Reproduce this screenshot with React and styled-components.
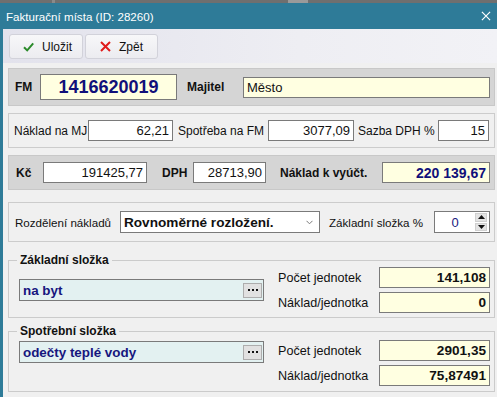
import React from 'react';
import styled, { createGlobalStyle } from 'styled-components';

const Global = createGlobalStyle`
  html, body { margin: 0; padding: 0; background: #f0f0f0; overflow: hidden; }
  body { font-family: "Liberation Sans", Arial, sans-serif; font-size: 12px; color: #111; }
  * { box-sizing: border-box; }
`;

const Screen = styled.div`
  width: 497px;
  height: 397px;
  display: flex;
  flex-direction: column;
  background: #6e6e6e;
  overflow: hidden;
`;

const BackStrip = styled.div`
  height: 3px;
  flex: none;
  background: linear-gradient(to right, #6f6f6f 0, #6f6f6f 52px, #8a8a8a 52px, #8a8a8a 55px, #6f6f6f 55px, #6f6f6f 288px, #9a9a9a 288px, #9a9a9a 308px, #6f6f6f 308px);
`;

const Window = styled.div`
  flex: 1;
  display: flex;
  flex-direction: column;
  border-left: 3px solid #2e7b98;
  background: #f0f0f0;
  min-height: 0;
`;

const TitleBar = styled.div`
  height: 26px;
  flex: none;
  display: flex;
  align-items: center;
  justify-content: space-between;
  padding: 0 6px 0 3px;
  background: #2e7b98;
  color: #fff;
  font-size: 11.6px;
`;

const Toolbar = styled.div`
  height: 34px;
  flex: none;
  display: flex;
  gap: 2px;
  padding: 5px 6px 4px;
  background: linear-gradient(to right, #e2e2ec, #eeeef3 60%, #f2f2f6);
`;

const ToolButton = styled.button`
  width: ${p => p.$w}px;
  height: 25px;
  display: flex;
  align-items: center;
  gap: 8px;
  padding: 0 0 0 ${p => p.$pl}px;
  border: 1px solid #d2d2da;
  border-radius: 3px;
  background: linear-gradient(#f7f7f9, #ececf0);
  font-family: inherit;
  font-size: 12px;
  color: #111;
`;

const Body = styled.div`
  flex: 1;
  display: flex;
  flex-direction: column;
  padding: 5px 2px 0 5px;
`;

const Panel = styled.div`
  flex: none;
  display: flex;
  align-items: center;
  height: ${p => p.$h}px;
  margin-top: ${p => p.$mt || 0}px;
  padding: 0 4px 0 ${p => p.$pl}px;
  background: ${p => (p.$dark ? '#d5d5d5' : '#f0f0f0')};
  border: 1px solid ${p => (p.$dark ? '#c8c8c8' : '#cccccc')};
`;

const Label = styled.span`
  flex: none;
  width: ${p => p.$w}px;
  padding-left: ${p => p.$pl || 0}px;
  font-size: ${p => p.$size || 12}px;
  font-weight: ${p => (p.$bold ? 'bold' : 'normal')};
  white-space: nowrap;
  color: #111;
`;

const Field = styled.div`
  flex: ${p => (p.$w ? 'none' : '1')};
  width: ${p => (p.$w ? `${p.$w}px` : 'auto')};
  height: ${p => p.$h || 21}px;
  display: flex;
  align-items: center;
  justify-content: ${p => p.$justify || 'flex-end'};
  padding: 0 3px;
  border: 1px solid #7a7a7a;
  background: ${p => (p.$yellow ? '#ffffe1' : '#ffffff')};
  color: ${p => p.$color || '#111'};
  font-size: ${p => p.$size || 13}px;
  font-weight: ${p => (p.$bold ? 'bold' : 'normal')};
  white-space: nowrap;
`;

const Select = styled.div`
  flex: none;
  width: 200px;
  height: 22px;
  display: flex;
  align-items: center;
  justify-content: space-between;
  padding: 0 6px 0 3px;
  border: 1px solid #7a7a7a;
  background: #fff;
  font-size: 13.6px;
  font-weight: bold;
  color: #111;
`;

const Spin = styled.div`
  flex: none;
  width: 56px;
  height: 22px;
  display: flex;
  align-items: center;
  border: 1px solid #7a7a7a;
  background: #fff;
`;

const SpinValue = styled.span`
  flex: 1;
  text-align: center;
  font-size: 13px;
  color: #1a1a80;
`;

const SpinArrows = styled.div`
  width: 12px;
  height: 18px;
  margin-right: 2px;
  display: flex;
  flex-direction: column;
  gap: 1px;
`;

const SpinBtn = styled.div`
  flex: 1;
  display: flex;
  align-items: center;
  justify-content: center;
  background: #e4e4e4;
  border: 1px solid #d0d0d0;
`;

const Group = styled.fieldset`
  flex: none;
  margin: ${p => p.$mt}px 0 0 0;
  padding: ${p => p.$pt || 0}px 4px ${p => p.$pb}px 10px;
  border: 1px solid #cbcbcb;
  min-width: 0;
`;

const Legend = styled.legend`
  margin-left: -2px;
  padding: 0 3px;
  font-size: 12px;
  line-height: 14px;
  font-weight: bold;
  color: #111;
`;

const GroupBody = styled.div`
  display: flex;
  align-items: ${p => p.$align};
`;

const Lookup = styled.div`
  flex: none;
  width: 245px;
  height: 22px;
  margin-top: ${p => p.$mt || 0}px;
  display: flex;
  align-items: center;
  padding-left: 3px;
  border: 1px solid #7a7a7a;
  background: #e3f1f1;
  color: #16167e;
  font-size: 13.4px;
  font-weight: bold;
`;

const DotButton = styled.div`
  margin-left: auto;
  margin-right: 1px;
  width: 19px;
  height: 15px;
  display: flex;
  align-items: center;
  justify-content: center;
  gap: 2px;
  background: #e1e1e1;
  border: 1px solid #adadad;
`;

const Dot = styled.span`
  width: 2px;
  height: 2px;
  background: #111;
`;

const Stack = styled.div`
  display: flex;
  flex-direction: column;
  gap: 4px;
  margin-left: 14px;
  flex: 1;
`;

const Row = styled.div`
  display: flex;
  align-items: center;
`;

const Check = () => (
  <svg width="11" height="10" viewBox="0 0 11 10">
    <path d="M1 5.2 L4.2 8.4 L10.2 1.4" fill="none" stroke="#2a8a2a" strokeWidth="2" />
  </svg>
);

const Cross = ({ color = '#e01b1b', size = 11, w = 2 }) => (
  <svg width={size} height={size} viewBox="0 0 11 11">
    <path d="M1 1 L10 10 M10 1 L1 10" fill="none" stroke={color} strokeWidth={w} />
  </svg>
);

const Chevron = () => (
  <svg width="7" height="5" viewBox="0 0 7 5">
    <path d="M0.5 0.8 L3.5 3.8 L6.5 0.8" fill="none" stroke="#7a7a7a" strokeWidth="1" />
  </svg>
);

const Tri = ({ up }) => (
  <svg width="7" height="4" viewBox="0 0 7 4">
    <path d={up ? 'M0 4 L3.5 0 L7 4 Z' : 'M0 0 L7 0 L3.5 4 Z'} fill="#111" />
  </svg>
);

const Lookups = ({ text, mt }) => (
  <Lookup $mt={mt}>
    {text}
    <DotButton>
      <Dot />
      <Dot />
      <Dot />
    </DotButton>
  </Lookup>
);

const Units = ({ count, cost }) => (
  <Stack>
    <Row>
      <Label $w={101} $size={12.6}>Počet jednotek</Label>
      <Field $w={111} $yellow $bold $size={13.6}>{count}</Field>
    </Row>
    <Row>
      <Label $w={101} $size={12.6}>Náklad/jednotka</Label>
      <Field $w={111} $yellow $bold $size={13.6}>{cost}</Field>
    </Row>
  </Stack>
);

export default function App() {
  return (
    <Screen>
      <Global />
      <BackStrip />
      <Window>
        <TitleBar>
          <span>Fakturační místa (ID: 28260)</span>
          <Cross color="#ffffff" size={10} w={1.3} />
        </TitleBar>
        <Toolbar>
          <ToolButton $w={74} $pl={13}>
            <Check />
            Uložit
          </ToolButton>
          <ToolButton $w={73} $pl={14}>
            <Cross />
            Zpět
          </ToolButton>
        </Toolbar>
        <Body>
          <Panel $dark $h={38} $pl={6}>
            <Label $w={25} $bold>FM</Label>
            <Field $w={137} $h={26} $yellow $justify="center" $bold $size={18} $color="#10107a">
              1416620019
            </Field>
            <Label $w={66} $pl={10} $bold>Majitel</Label>
            <Field $yellow $justify="flex-start" $size={13}>Město</Field>
          </Panel>

          <Panel $mt={7} $h={35} $pl={5}>
            <Label $w={74}>Náklad na MJ</Label>
            <Field $w={85}>62,21</Field>
            <Label $w={95} $pl={5}>Spotřeba na FM</Label>
            <Field $w={86}>3077,09</Field>
            <Label $w={84} $pl={4}>Sazba DPH %</Label>
            <Field $w={51}>15</Field>
          </Panel>

          <Panel $dark $mt={7} $h={35} $pl={7}>
            <Label $w={27} $bold>Kč</Label>
            <Field $w={104}>191425,77</Field>
            <Label $w={46} $pl={15} $bold>DPH</Label>
            <Field $w={73}>28713,90</Field>
            <Label $w={116} $pl={14} $bold>Náklad k vyúčt.</Label>
            <Field $w={108} $yellow $bold $size={14} $color="#10107a">220 139,67</Field>
          </Panel>

          <Panel $mt={12} $h={40} $pl={6}>
            <Label $w={105} $size={11.6}>Rozdělení nákladů</Label>
            <Select>
              Rovnoměrné rozložení.
              <Chevron />
            </Select>
            <Label $w={114} $pl={9} $size={11.6}>Základní složka %</Label>
            <Spin>
              <SpinValue>0</SpinValue>
              <SpinArrows>
                <SpinBtn><Tri up /></SpinBtn>
                <SpinBtn><Tri /></SpinBtn>
              </SpinArrows>
            </Spin>
          </Panel>

          <Group $mt={11} $pb={4}>
            <Legend>Základní složka</Legend>
            <GroupBody $align="center">
              <Lookups text="na byt" />
              <Units count="141,108" cost="0" />
            </GroupBody>
          </Group>

          <Group $mt={6} $pt={2} $pb={5}>
            <Legend>Spotřební složka</Legend>
            <GroupBody $align="flex-start">
              <Lookups text="odečty teplé vody" mt={1} />
              <Units count="2901,35" cost="75,87491" />
            </GroupBody>
          </Group>
        </Body>
      </Window>
    </Screen>
  );
}
